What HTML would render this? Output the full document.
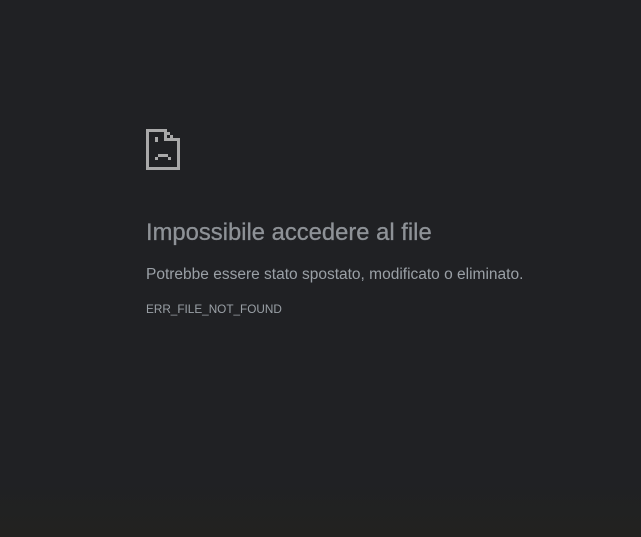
<!DOCTYPE html>
<html><head><style>
html,body{margin:0;padding:0;width:641px;height:537px;overflow:hidden;background:#202124;}
body{background:linear-gradient(#202124 0,#202124 480px,#222220 537px);font-family:"Liberation Sans",sans-serif;color:#9aa0a6;position:relative;}
svg{position:absolute;left:0;top:0}
h1{position:absolute;left:146px;top:219px;margin:0;font-size:23.8px;font-weight:normal;color:#8e9297;-webkit-text-stroke:0.3px #8e9297;}
p{position:absolute;left:146px;top:266px;margin:0;font-size:15.5px;color:#9aa0a6;}
.c{position:absolute;left:146px;top:303px;font-size:11.75px;color:#9aa0a6;}
</style></head><body>
<svg width="641" height="537" fill="#a9a9a9">
<rect x="146" y="129" width="3" height="41"/>
<rect x="146" y="167" width="34" height="3"/>
<rect x="177" y="141" width="3" height="29"/>
<rect x="146" y="129" width="21" height="3"/>
<rect x="164" y="129" width="3" height="12"/>
<rect x="164" y="138" width="16" height="3"/>
<rect x="167" y="132" width="3" height="3"/>
<rect x="170" y="135" width="3" height="3"/>
<rect x="155" y="137" width="3" height="5"/>
<rect x="158" y="154" width="10" height="3"/>
<rect x="155" y="157" width="3" height="3"/>
<rect x="168" y="157" width="3" height="3"/>
</svg>
<h1>Impossibile accedere al file</h1>
<p>Potrebbe essere stato spostato, modificato o eliminato.</p>
<div class="c">ERR_FILE_NOT_FOUND</div>
</body></html>
